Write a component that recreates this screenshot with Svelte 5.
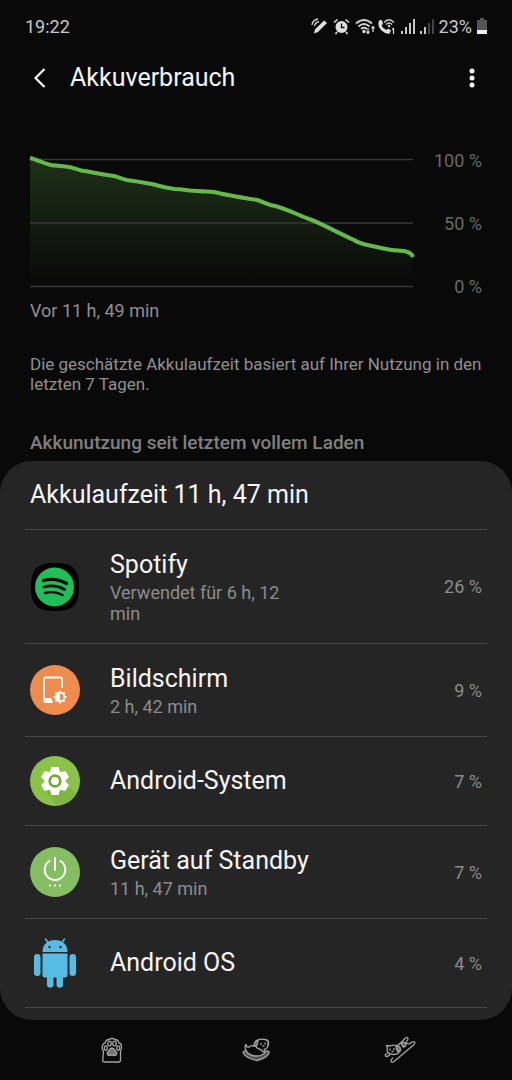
<script lang="ts">
  interface Usage {
    id: string;
    name: string;
    detail?: string;
    percent: number;
  }

  const usages: Usage[] = [
    { id: 'spotify', name: 'Spotify', detail: 'Verwendet für 6 h, 12 min', percent: 26 },
    { id: 'screen', name: 'Bildschirm', detail: '2 h, 42 min', percent: 9 },
    { id: 'system', name: 'Android-System', percent: 7 },
    { id: 'standby', name: 'Gerät auf Standby', detail: '11 h, 47 min', percent: 7 },
    { id: 'android', name: 'Android OS', percent: 4 },
  ];

  const levels = [100, 50, 0];

  // x in chart units (0-383), y counted down from the 100 % line (0-128)
  const line =
    'M0 -1 C8 1 15 5 21 6 C28 7 36 7 43 9 C48 10 51 12 55 12 C65 14 75 16 84 17 ' +
    'C88 18 92 20 97 21 C106 22 115 24 122 25 C129 27 136 29 145 30 C152 30 160 32 169 32 ' +
    'C175 33 180 32 184 33 C196 36 208 38 227 41 C234 43 237 46 245 47 C257 50 268 56 279 60 ' +
    'C291 64 306 73 324 81 C331 86 340 86 351 89 C359 91 365 92 374 92 C379 93 382 95 383 98';

  const gearTeeth = [0, 60, 120, 180, 240, 300];
  const sunRays = [0, 45, 90, 135, 180, 225, 270, 315];
</script>

<svelte:head><title>Akkuverbrauch</title></svelte:head>

<div class="screen">
  <div class="status">
    <span>19:22</span>
    <div class="status-icons">
      <svg width="17" height="17" viewBox="0 0 17 17">
        <path d="M3 15.500 4 11.500 13 2.500 16 5 7 14 Z" fill="#dedede" />
        <path d="M1 7Q1.500 2 7 1M3.500 8Q4 4.500 8 3.500" fill="none" stroke="#cfcfcf" stroke-width="1.300" />
      </svg>
      <svg width="17" height="17" viewBox="0 0 17 17">
        <circle cx="8.500" cy="9" r="6" fill="#dedede" />
        <path d="M1 4.500 4.500 1.500M16 4.500 12.500 1.500M4 14 2.500 16M13 14 14.500 16" stroke="#dedede" stroke-width="1.600" />
        <path d="M8.500 5.500V9.500H11.500" fill="none" stroke="#090909" stroke-width="1.300" />
      </svg>
      <svg class="wifi" width="21" height="17" viewBox="0 0 21 17">
        <g fill="none" stroke="#d0d0d0" stroke-width="1.700">
          <path d="M1 5.500Q9 -1.500 17 5.500" />
          <path d="M3.500 8.500Q9 3.500 14.500 8.500" />
          <path d="M6 11Q9 8.500 12 11" />
        </g>
        <circle cx="9" cy="13.500" r="1.700" fill="#dedede" />
        <path d="M13 10V15M11.500 13.500 13 15.500 14.500 13.500M18 14V9M16.500 10.500 18 8.500 19.500 10.500" fill="none" stroke="#dedede" stroke-width="1.200" />
      </svg>
      <svg width="19" height="17" viewBox="0 0 19 17">
        <path d="M2 2.500 5 2 6 6 4.500 7.500Q6 11 9.500 12L11 10.500 14 12.500 12.500 15.500Q9 16.500 4.500 12.500Q0 8 2 2.500Z" fill="#dedede" />
        <path d="M7 4.500Q12 -1 17 4.500M9 6.500Q12 3.500 15 6.500" fill="none" stroke="#d0d0d0" stroke-width="1.300" />
        <circle cx="12" cy="8" r="1.200" fill="#dedede" />
        <path d="M15 11.500 16.500 10.500V16" fill="none" stroke="#dedede" stroke-width="1.200" />
      </svg>
      <svg width="14" height="15" viewBox="0 0 14 15">
        <path d="M1 12V15M5 8V15M9 4V15M13 0V15" stroke="#dcdcdc" stroke-width="1.800" />
      </svg>
      <svg width="14" height="15" viewBox="0 0 14 15">
        <path d="M1 12V15M5 8V15" stroke="#dcdcdc" stroke-width="1.800" />
        <path d="M9 4V15M13 0V15" stroke="#4c4c4c" stroke-width="1.800" />
      </svg>
      <span class="charge">23%</span>
      <svg width="10" height="16" viewBox="0 0 10 16">
        <path d="M3 0H7V2H10V16H0V2H3Z" fill="#555" />
        <path d="M0 12H10V16H0Z" fill="#f0f0f0" />
      </svg>
    </div>
  </div>

  <header>
    <button class="icon-button" aria-label="Zurück">
      <svg width="12" height="20" viewBox="0 0 12 20">
        <path d="M10.500 1 1.500 10 10.500 19" fill="none" stroke="#f5f5f5" stroke-width="2.200" />
      </svg>
    </button>
    <h1>Akkuverbrauch</h1>
    <button class="icon-button" aria-label="Weitere Optionen">
      <svg width="6" height="20" viewBox="0 0 6 20" fill="#f5f5f5">
        <circle cx="3" cy="3" r="2.500" />
        <circle cx="3" cy="10" r="2.500" />
        <circle cx="3" cy="17" r="2.500" />
      </svg>
    </button>
  </header>

  <section class="history">
    <div class="chart">
      <svg class="plot" viewBox="0 0 383 128" preserveAspectRatio="none" role="img" aria-label="Akkustand">
        <defs>
          <linearGradient id="fade" gradientUnits="userSpaceOnUse" x1="0" y1="0" x2="0" y2="124">
            <stop offset="0" stop-color="#65b84a" stop-opacity="0.230" />
            <stop offset="1" stop-color="#65b84a" stop-opacity="0" />
          </linearGradient>
        </defs>
        <path d="{line} V128 H0 Z" fill="url(#fade)" />
        <path d="M0 .5H383M0 64H383M0 127.500H383" stroke="#373837" stroke-width="1.500" />
        <path class="curve" d={line} />
      </svg>
      <div class="levels">
        {#each levels as level (level)}
          <span>{level} %</span>
        {/each}
      </div>
    </div>
    <p class="since">Vor 11 h, 49 min</p>
    <p class="note">Die geschätzte Akkulaufzeit basiert auf Ihrer Nutzung in den letzten 7 Tagen.</p>
  </section>

  <h2>Akkunutzung seit letztem vollem Laden</h2>

  <section class="card">
    <h3>Akkulaufzeit 11 h, 47 min</h3>
    <ul>
      {#each usages as usage (usage.id)}
        <li>
          <svg class="app-icon" viewBox="0 0 50 50">
            {#if usage.id === 'spotify'}
              <path d="M25 1C43 1 49 7 49 25S43 49 25 49 1 43 1 25 7 1 25 1Z" fill="#000" />
              <circle cx="24.500" cy="25" r="19.500" fill="#20bd59" />
              <g fill="none" stroke="#050b07" stroke-linecap="round">
                <path d="M13.500 18.500Q25 15 36.500 21.500" stroke-width="3.200" />
                <path d="M14 25Q25 22 34.500 27.500" stroke-width="2.800" />
                <path d="M15 31Q24.500 28.500 32.500 33" stroke-width="2.400" />
              </g>
            {:else if usage.id === 'screen'}
              <circle cx="25" cy="25" r="25" fill="#ee8c50" />
              <path d="M32 23V14Q32 12.500 30.500 12.500H15.500Q14 12.500 14 14V35" fill="none" stroke="#fff" stroke-width="1.800" />
              <path d="M13 33H21L23 38H15Q13 38 13 36Z" fill="#fff" />
              <g transform="translate(30 32)">
                {#each sunRays as angle (angle)}
                  <path d="M-1.800 -4.500 0 -7 1.800 -4.500Z" transform="rotate({angle})" fill="#fff" />
                {/each}
                <circle r="5" fill="#fff" />
                <path d="M0 -3.500A3.500 3.500 0 0 1 0 3.500Z" fill="#ee8c50" />
              </g>
            {:else if usage.id === 'system'}
              <circle cx="25" cy="25" r="25" fill="#8bc34a" />
              <path d="M14 34 27 49 40 45 46 38 36 28Z" fill="#7fb542" />
              <g transform="translate(25 25)" fill="#fff">
                {#each gearTeeth as angle (angle)}
                  <path d="M-5 -9 -3.500 -14H3.500L5 -9Z" transform="rotate({angle})" />
                {/each}
                <circle r="10.500" />
                <circle r="5.300" fill="none" stroke="#73ab36" stroke-width="2.800" />
              </g>
            {:else if usage.id === 'standby'}
              <circle cx="25" cy="25" r="25" fill="#85bd62" />
              <g fill="none" stroke="#fff" stroke-width="2" stroke-linecap="round">
                <path d="M25 11V23" />
                <path d="M19.500 14A10.300 10.300 0 1 0 30.500 14" />
              </g>
              <g fill="#fff">
                <circle cx="20" cy="38.500" r="1.100" />
                <circle cx="25" cy="38.500" r="1.100" />
                <circle cx="30" cy="38.500" r="1.100" />
              </g>
            {:else}
              <g fill="#57bce5">
                <path d="M12.500 14C12.500 6 18 2 25 2S37.500 6 37.500 14Z" />
                <path d="M12.500 15.500H37.500V37Q37.500 39.500 35 39.500H33V47A3.300 3.300 0 0 1 26.500 47V39.500H23.500V47A3.300 3.300 0 0 1 17 47V39.500H15Q12.500 39.500 12.500 37Z" />
                <rect x="4" y="16" width="6.500" height="22" rx="3.200" />
                <rect x="39.500" y="16" width="6.500" height="22" rx="3.200" />
              </g>
              <path d="M18 4.500 15.500 1M32 4.500 34.500 1" stroke="#57bce5" stroke-width="1.500" stroke-linecap="round" />
              <circle cx="19.500" cy="9" r="1.200" fill="#252525" />
              <circle cx="30.500" cy="9" r="1.200" fill="#252525" />
            {/if}
          </svg>
          <div class="info">
            <div class="name">{usage.name}</div>
            {#if usage.detail}
              <div class="detail">{usage.detail}</div>
            {/if}
          </div>
          <span class="percent">{usage.percent} %</span>
        </li>
      {/each}
    </ul>
  </section>

  <nav>
    <button aria-label="Letzte Apps">
      <svg width="22" height="26" viewBox="0 0 22 26" fill="none" stroke="#a4a4a4" stroke-width="1.300" stroke-linejoin="round">
        <path d="M3 25Q1.500 25 1.800 22L2.500 14Q.5 12 1.500 8.500Q2.500 6 4 6Q5 2.500 8 2.500Q11 .5 14 2.500Q17 2.500 18 6Q20.500 6.500 20.500 10Q20.500 12.500 19.500 14V23Q19.500 25 17.500 25Z" />
        <ellipse cx="8.500" cy="6.500" rx="1.800" ry="2.400" />
        <ellipse cx="13.500" cy="6.500" rx="1.800" ry="2.400" />
        <ellipse cx="4.800" cy="11" rx="1.500" ry="2.200" />
        <ellipse cx="17.200" cy="11" rx="1.500" ry="2.200" />
        <path d="M11 11Q13 11 14 13.500Q17 16 15 18Q13.500 19 11 18Q8.500 19 7 18Q5 16 8 13.500Q9 11 11 11Z" fill="#777" />
      </svg>
    </button>
    <button aria-label="Startbildschirm">
      <svg width="28" height="24" viewBox="0 0 28 24" fill="none" stroke="#a4a4a4" stroke-width="1.300" stroke-linejoin="round" stroke-linecap="round">
        <path d="M1 14.500Q1.500 12.500 4 13Q8 18 14 18Q21 18 24.500 13Q27.500 12.500 27 15Q25 20 15 22.500Q4 20.500 1 14.500Z" fill="#555" />
        <path d="M4.500 13Q2 9 4 6.500Q4.500 9 6 9.500Q9 7 13 8" />
        <path d="M14 8.500Q15 11 19 11.500Q20 14 22.500 14Q23.500 13 22 11.500Q26 10.500 26.500 6Q27 2 23 1.500Q18 .5 15.500 2.500" />
        <path d="M16 2Q12 3 12 8Q15 9 15.500 5Z" fill="#666" />
        <path d="M25.500 2.500Q27.500 5 25.500 7M19 5.500V6.500M23 5V6M21 8H22" />
      </svg>
    </button>
    <button aria-label="Zurück">
      <svg width="32" height="28" viewBox="0 0 32 28" fill="none" stroke="#a4a4a4" stroke-width="1.300" stroke-linejoin="round" stroke-linecap="round">
        <path d="M3.500 12 2.500 9.500 6 10Q9 8.500 12 9.500L14 10Q17 13 14.500 17Q10 20 5 17Q2 15 3.500 12Z" />
        <path d="M12 10Q16 9 16.500 13Q16.500 16 14 16Q12 14 12 10Z" fill="#777" />
        <path d="M4 17Q.5 18 1.500 20Q3 21.500 6 18.500M14 9Q18 6 21.500 2Q24 .5 24 3L22 7Q25 9 28 6Q31 5 31 7Q30 9 26 12L10 25.500Q7 27.500 7 24.500L8.500 22" />
        <path d="M17 7.500Q21 5 22 8Q22 11 19 11Z" fill="#666" />
        <path d="M6 13V14M10 12.500V13.500M8 15.500H9" />
      </svg>
    </button>
  </nav>
</div>

<style>
  :global(body) { margin: 0; background: #090909; }

  .screen {
    display: flex; flex-direction: column; min-height: 100vh;
    font-family: Roboto, "Noto Sans", sans-serif; color: #f5f5f5; background: #090909;
  }
  h1, h2, h3, p, ul { margin: 0; padding: 0; font-weight: 400; }
  button { display: flex; align-items: center; justify-content: center; padding: 0; border: 0; background: none; }
  svg { display: block; flex: none; }

  /* Status bar */
  .status {
    display: flex; align-items: center; justify-content: space-between;
    height: 52px; padding: 0 25px; font-size: 18px; color: #c8c8c8;
  }
  .status-icons { display: flex; align-items: center; gap: 5px; }
  .wifi { margin-right: -4px; }

  header { display: flex; align-items: center; height: 52px; padding: 0 20px; }
  header h1 { flex: 1; margin-left: 10px; font-size: 25px; line-height: 34px; }
  .icon-button { width: 40px; height: 40px; }

  /* Battery history */
  .history { padding: 0 30px; color: #909090; }
  .chart { display: flex; margin-top: 55px; }
  .plot { flex: 1; min-width: 0; height: 128px; overflow: visible; }
  .curve {
    fill: none; stroke: #65b84a; stroke-width: 4px;
    stroke-linejoin: round; vector-effect: non-scaling-stroke;
  }
  .levels {
    display: flex; flex-direction: column; justify-content: space-between;
    width: 69px; margin: -9px 0 -11px; font-size: 18px; line-height: 22px; text-align: right; color: #696969;
  }
  .since { margin-top: 13px; font-size: 18px; line-height: 22px; }
  .note { margin-top: 32px; font-size: 17px; line-height: 20px; }

  h2 { padding: 37px 30px 6px; font-size: 19px; line-height: 24px; font-weight: 500; color: #808080; }

  /* Usage list */
  .card { padding: 0 25px 12px; border-radius: 32px; background: #252525; }
  h3 { padding: 18px 5px; font-size: 25px; line-height: 32px; border-bottom: 1px solid #484848; }
  ul { list-style: none; }
  li {
    display: flex; align-items: center; min-height: 88px;
    padding: 0 5px; border-bottom: 1px solid #484848;
  }
  .app-icon { width: 50px; height: 50px; }
  .info { flex: 1; padding: 17px 0 19px; margin-left: 30px; }
  .name { font-size: 25px; line-height: 35px; }
  .detail { max-width: 180px; font-size: 18px; line-height: 21px; color: #8c8c8c; }
  .percent { font-size: 18px; color: #8c8c8c; }

  nav {
    display: grid; grid-template-columns: repeat(3, 1fr); flex: 1;
    min-height: 60px; padding: 0 40px;
  }
</style>
